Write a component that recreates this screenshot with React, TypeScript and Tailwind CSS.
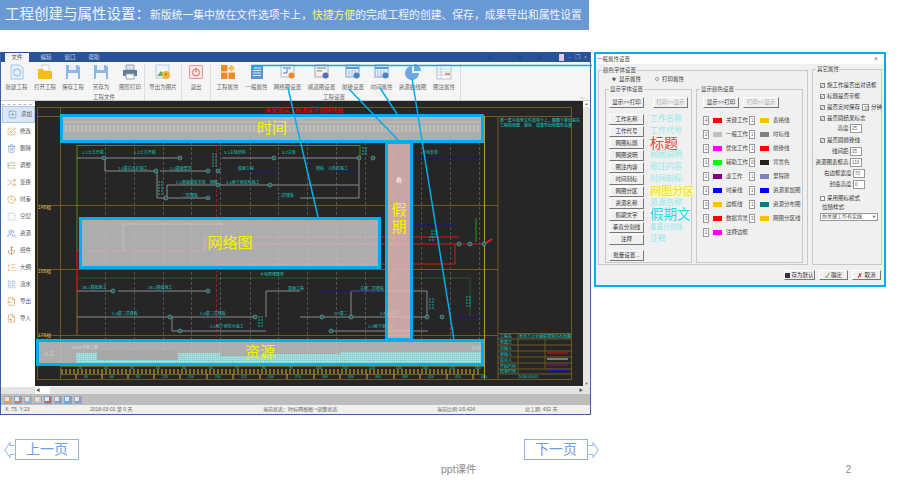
import React from 'react';
import {
  SquarePlus, SquarePen, Trash2, ListTree, Shuffle, Clock, SquareDashed, Users, Anchor, ListOrdered, LayoutGrid, FileOutput, FileInput,
} from 'lucide-react';

const FONT = '"Liberation Sans", "Noto Sans CJK SC", sans-serif';

// ---- ribbon data
const fileItems = [
  { label: '新建工程', kind: 'new', w: 'w-[29px]' },
  { label: '打开工程', kind: 'open', w: 'w-[28px]' },
  { label: '保存工程', kind: 'save', w: 'w-[28px]' },
  { label: '另存为', kind: 'save', w: 'w-[28px]' },
  { label: '图形打印', kind: 'print', w: 'w-[30px]' },
];

const projectItems = [
  { label: '工程属性', kind: 'blocks', w: 'w-[29px]' },
  { label: '一般属性', kind: 'list', w: 'w-[29px]' },
  { label: '网络图设置', kind: 'net', w: 'w-[33px]' },
  { label: '横道图设置', kind: 'gear', w: 'w-[35px]' },
  { label: '前锋设置', kind: 'grid', w: 'w-[28px]' },
  { label: '时间属性', kind: 'grid', w: 'w-[29px]' },
  { label: '资源曲线图', kind: 'pie', w: 'w-[33px]' },
  { label: '图注属性', kind: 'table', w: 'w-[30px]' },
];

function RibbonIcon({ kind }: { kind: string }) {
  return (
    <svg width="16" height="16" viewBox="0 0 16 16">
      {kind === 'new' && (
        <>
          <path d="M2 1h9l3 3v11H2z" fill="#e4f0fa" stroke="#a9c6e2" />
          <circle cx="8" cy="8.5" r="3.5" fill="none" stroke="#8cb4dc" />
        </>
      )}
      {kind === 'open' && (
        <>
          <path d="M5 1h7v6H5z" fill="#fff" stroke="#ccc" />
          <path d="M1 5h5l1 2h8v8H1z" fill="#f9bc15" />
        </>
      )}
      {kind === 'save' && (
        <>
          <path d="M1 1h12l2 2v12H1z" fill="#8cb8e8" />
          <path d="M4 1h7v5H4z" fill="#e8f1fb" />
          <path d="M3 9h10v6H3z" fill="#f2f6fb" />
        </>
      )}
      {kind === 'print' && (
        <>
          <path d="M4 1h8v5H4z" fill="#dfe3e8" stroke="#9aa5b1" />
          <path d="M1 6h14v6H1z" fill="#5f7f9c" />
          <path d="M4 10h8v5H4z" fill="#fff" stroke="#9aa5b1" />
        </>
      )}
      {kind === 'image' && (
        <>
          <path d="M1 1h13v13H1z" fill="#eef4fb" stroke="#b7cbe0" />
          <path d="M2 12l4-5 3 3 2-1 2 3z" fill="#6fb04a" />
          <circle cx="11" cy="11" r="4" fill="#f4b63f" />
          <path d="M11 9v2.5" stroke="#8a5a00" />
        </>
      )}
      {kind === 'exit' && (
        <>
          <rect x="1.5" y="1.5" width="13" height="13" rx="1" fill="#f7e4e4" stroke="#d79a9a" />
          <circle cx="8" cy="8.5" r="3.5" fill="none" stroke="#d86a6a" />
          <path d="M8 4v4" stroke="#d86a6a" />
        </>
      )}
      {kind === 'blocks' && (
        <>
          <rect x="1" y="1" width="6.5" height="6.5" fill="#ef8a2e" />
          <path d="M11.5 .8l3.5 3.5-3.5 3.5L8 4.300z" fill="#f7c04a" />
          <rect x="1" y="8.500" width="6.500" height="6.500" fill="#ef8a2e" />
          <rect x="8.500" y="8.500" width="6.500" height="6.500" fill="#ef8a2e" />
        </>
      )}
      {kind === 'list' && (
        <>
          <rect x="2" y="1" width="12" height="14" fill="#5b94d0" />
          <path d="M4 4h8M4 6.500h8M4 9h8M4 11.500h8" stroke="#dbe9f7" />
        </>
      )}
      {kind === 'net' && (
        <>
          <rect x="1" y="1" width="13" height="12" fill="#f7f7f7" stroke="#bbb" />
          <path d="M3 4h8M3 9h4V5" stroke="#5a6bc4" fill="none" />
          <circle cx="11.500" cy="11.500" r="3" fill="#ef8a2e" />
        </>
      )}
      {kind === 'gear' && (
        <>
          <rect x="1" y="1" width="13" height="12" fill="#f3f3f3" stroke="#aaa" />
          <path d="M3 4h9M3 7h5" stroke="#b56f5f" />
          <circle cx="11.500" cy="11.500" r="3" fill="#5a6bc4" />
        </>
      )}
      {kind === 'grid' && (
        <>
          <rect x="1" y="1" width="13" height="12" fill="#e9f0f8" stroke="#7ea3cc" />
          <path d="M1 4h13" stroke="#6a94c4" strokeWidth="2" />
          <path d="M4 6v6M7 6v6M10 6v6" stroke="#9ab5d4" />
          <circle cx="11.500" cy="11.500" r="3" fill="#4d84c0" />
        </>
      )}
      {kind === 'pie' && (
        <>
          <path d="M7 2a7 7 0 1 0 7 7H7z" fill="#6fa5e0" />
          <path d="M9 0a7 7 0 0 1 7 7H9z" fill="#6fa5e0" />
        </>
      )}
      {kind === 'table' && (
        <>
          <rect x="1" y="1" width="14" height="14" fill="#fbfbfb" stroke="#b9c6d4" />
          <path d="M5 1v14M1 5h14M1 8h14M1 11h14" stroke="#c5d3e2" />
          <rect x="9" y="9" width="5" height="2" fill="#ef9a5e" />
        </>
      )}
    </svg>
  );
}

function RibbonButton({ label, kind, w }: { label: string; kind: string; w: string }) {
  return (
    <div className={`flex flex-col items-center ${w}`}>
      <div className="h-[17px]">
        <RibbonIcon kind={kind} />
      </div>
      <span className="mt-[2px] text-[5.5px] leading-[8px] whitespace-nowrap text-[#666]">{label}</span>
    </div>
  );
}

// ---- left tool column
const sideItems = [
  { name: '添加', Icon: SquarePlus, color: '#5f8fd0' },
  { name: '修改', Icon: SquarePen, color: '#d89a40' },
  { name: '删除', Icon: Trash2, color: '#5f8fc4' },
  { name: '调整', Icon: ListTree, color: '#7aa060' },
  { name: '变换', Icon: Shuffle, color: '#d08a50' },
  { name: '时差', Icon: Clock, color: '#d8a030' },
  { name: '空层', Icon: SquareDashed, color: '#6f9fd8' },
  { name: '资源', Icon: Users, color: '#4f7fc0' },
  { name: '组件', Icon: Anchor, color: '#c07050' },
  { name: '大纲', Icon: ListOrdered, color: '#e09a50' },
  { name: '流水', Icon: LayoutGrid, color: '#8fb0d0' },
  { name: '导出', Icon: FileOutput, color: '#d08a40' },
  { name: '导入', Icon: FileInput, color: '#d08a40' },
];

// ---- CAD drawing
const gridX = [105, 134, 163, 191, 220, 250, 278, 307, 336, 365, 393, 421, 450, 479];
const grayPaths = [
  'M77 159H103M106 159H180M105 159V172H155M160 172H208M157 172V199H166M167 199H208M167 199V186H218M218 186H270M272 186H359M222 159H274M278 159H359M359 159V199H300',
  'M77 292H113M118 292H208M77 318H170M172 318H255M172 318V332H180M180 332H266M266 292V318M266 292H300M351 292V318M351 292H427V318M331 332H428M300 318H427',
  'M123 252V225H226M205 252V238',
];
const nodes = [
  [104, 159], [180, 159], [156, 172], [208, 172], [166, 199], [208, 199], [218, 186], [218, 172], [270, 186], [274, 159], [359, 159], [373, 159],
  [113, 292], [208, 292], [170, 318], [255, 318], [180, 332], [322, 318], [351, 318], [427, 318], [442, 318], [331, 332], [459, 245], [470, 245], [484, 245],
];
const tealLabels = [
  [82, 155, '1-1土方开挖'], [134, 155, '1-2土方开挖'], [118, 171, '1-3基坑支护施工'], [170, 171, '1-4基础垫层'], [176, 185, '2-1基础模板安装、钢筋'], [226, 185, '2-4地下室结构施工'],
  [182, 198, '二层楼板'], [224, 155, '3-1主体结构'], [282, 155, '3-2主体'], [238, 171, '屋面工程'], [278, 198, '二层楼板'], [316, 171, '楼板、人防层施工'], [422, 155, '水电安装'],
  [82, 290, '1B-1基础施工'], [148, 290, '1B-2基础施工'], [112, 316, '1-3基二层楼板'], [200, 316, '1-4基二层楼板'], [210, 329, '1-5地下室防水施工'], [288, 291, '屋面工程'],
  [360, 291, '主楼二层楼板'], [380, 316, '1-8基层施工'], [368, 329, '1-9地下室施工'], [260, 277, '水电预埋配管'], [334, 316, '1-7基二'],
];
const stackTags = [
  [212, 155, 5], [158, 183, 5], [466, 298, 4], [258, 318, 4], [429, 300, 4], [431, 232, 3], [362, 149, 3], [429, 238, 2],
];

function CadDrawing() {
  const ticks = Array.from({ length: 105 }, (_, i) => 62 + i * 4);
  const rulerX = [76, 102, 128, 154, 180, 207, 233, 260, 287, 314, 340, 367, 394, 420, 447, 473];
  return (
    <svg viewBox="35 102 548 285" className="w-full h-full block" fontFamily={FONT}>
      <rect x="35" y="102" width="548" height="285" fill="#262626" />
      {/* frame */}
      <g stroke="#6f5a20" fill="none" strokeWidth="1">
        <path d="M37.500 108.500H571.500V380.500H37.500zM37.500 117.500H571.500M60.500 108V380M37 206.500H498M37 270.500H498M37 336.500H498M498 117V380" />
        <path d="M60 367.500H484M60 375.500H484M498 334.500H571M498 340H571M498 346H571M498 352H571M498 358H571M498 364H571M498 370H571M498 375H571M518 334V375M545 340V370" />
      </g>
      <path d="M484.500 117V380" stroke="#b99a3c" />
      <path d="M77 146.500H360V158" stroke="#4b8a12" fill="none" />
      <path d="M77 146V252" stroke="#5a8a10" />
      <path d="M77 252V292" stroke="#d01010" strokeWidth="1.500" />
      <path d="M77 292V336" stroke="#8a6a22" />
      <path d="M77 279H470V318" stroke="#1d5c1d" fill="none" />
      {/* grid */}
      {gridX.map((x) => (
        <path key={x} d={`M${x}.5 143V367`} stroke="#666" strokeDasharray="3 2" strokeWidth="0.7" />
      ))}
      <path d="M216.500 130V340" stroke="#a01828" strokeDasharray="3 2" />
      {/* time scale */}
      <path d="M62 119H484M62 123H484M62 127H484M62 132H484" stroke="#b8a878" strokeWidth="0.7" />
      {ticks.map((x) => (
        <path key={x} d={`M${x} 127V132`} stroke="#c8b478" strokeWidth="1" />
      ))}
      {/* links */}
      {grayPaths.map((d) => (
        <path key={d} d={d} stroke="#8a8a8a" fill="none" strokeWidth="1" />
      ))}
      <path d="M77 252H205V238H459M216 265H455V245M205 245H482" stroke="#d01818" fill="none" />
      <path d="M247 172H274M335 172H358M412 159H484M412 226H455M456 318H484M320 292H386" stroke="#16167a" fill="none" />
      <path d="M476 219V243" stroke="#18a018" />
      <path d="M486 244l6-4" stroke="#e02020" strokeWidth="2" />
      {nodes.map(([x, y]) => (
        <circle key={`${x}-${y}`} cx={x} cy={y} r="2" fill="#2d5a5a" stroke="#59a5a5" strokeWidth="0.7" />
      ))}
      {tealLabels.map(([x, y, t]) => (
        <text key={`${x}-${y}`} x={x} y={y} fontSize="4" fill="#18c8c0">{t}</text>
      ))}
      {/* work names stacked vertically beside short links */}
      {stackTags.map(([x, y, n]) => (
        <g key={`${x}-${y}`} stroke="#19b0ac" strokeWidth="1" strokeDasharray="2 1">
          {Array.from({ length: n }, (_, i) => (
            <path key={i} d={`M${x} ${y + i * 3}h6`} />
          ))}
        </g>
      ))}
      <text x="44" y="356" fontSize="5" fill="#fff">人工</text>
      <text x="72" y="350" fontSize="4" fill="#dff">43.25平米工期</text>
      <text x="472" y="351" fontSize="4" fill="#0ff">累加值</text>
      {/* bottom ruler */}
      {ticks.map((x) => (
        <path key={x} d={`M${x} 370V375`} stroke="#d8b030" strokeWidth="1" />
      ))}
      {rulerX.map((x, i) => (
        <g key={x}>
          <path d={`M${x} 375V380`} stroke="#d8b030" />
          <text x={x + 8} y="379" fontSize="3.500" fill="#18c8c0">{(i + 1) * 30}</text>
          <text x={x + 2} y="370" fontSize="3.500" fill="#18c8c0">{(i + 1) * 10}</text>
        </g>
      ))}
      <text x="38" y="210" fontSize="5" fill="#c8b44c">148楼</text>
      <text x="38" y="274" fontSize="5" fill="#c8b44c">168楼</text>
      <text x="38" y="338" fontSize="5" fill="#c8b44c">178楼</text>
      <text x="265" y="113" fontSize="6" fill="#ff0000">某安置房工程进度计划横线图</text>
      <g fontSize="4" fill="#18d8d0">
        <text x="500" y="123">新一集中放至文件选项卡上，图图下拿出来在</text>
        <text x="500" y="128">工程的创建、保存、成果导出和属性设置</text>
        <text x="500" y="339">工程名</text>
        <text x="519" y="339">某省万元全面联建竖向布局图</text>
        <text x="500" y="345">所属方</text>
        <text x="500" y="351">校核人</text>
        <text x="500" y="357">审核人</text>
        <text x="500" y="363">校对人</text>
        <text x="500" y="369">开始时间</text>
        <text x="500" y="374">结束时间</text>
        <text x="518" y="379">2018-03-01</text>
      </g>
      <path d="M547 354H568" stroke="#e01010" />
      <path d="M547 360H568" stroke="#cfcfcf" />
      <path d="M547 366H568" stroke="#801080" />
      <path d="M547 372H568" stroke="#1010d0" strokeWidth="1.500" />
    </svg>
  );
}

// histogram that shows through the resource callout
function ResourceChart() {
  return (
    <svg viewBox="39 342 442 21" preserveAspectRatio="none" className="absolute inset-0 w-full h-full">
      <defs>
        <pattern id="resDots" width="2" height="2" patternUnits="userSpaceOnUse">
          <rect width="2" height="2" fill="#a6dcdc" />
          <rect width="1" height="1" fill="#7cc8c8" />
        </pattern>
      </defs>
      <path d="M76 353H143V360H178V353H220V356H260V354H340V352H481V363H76z" fill="url(#resDots)" />
      <path d="M97 350H177V360H97z" fill="#a8a8a8" />
    </svg>
  );
}

// ---- dialog data
const fontRows = [
  { name: '工作名称', sample: '工作名称', cls: 'text-[8px] text-[#8ceaea]' },
  { name: '工作代号', sample: '工作代号', cls: 'text-[8px] text-[#8ceaea]' },
  { name: '网图标题', sample: '标题', cls: 'text-[14px] text-[#f04040]' },
  { name: '网图说明', sample: '网图说明', cls: 'text-[8px] text-[#8ceaea]' },
  { name: '图注内容', sample: '图注内容', cls: 'text-[8px] text-[#8ceaea]' },
  { name: '时间刻标', sample: '时间刻标', cls: 'text-[8px] text-[#8ceaea]' },
  { name: '网图分区', sample: '网图分区', cls: 'text-[11px] text-[#ecdc30] bg-[#fafab4]' },
  { name: '资源名称', sample: '资源名称', cls: 'text-[8px] text-[#8ceaea]' },
  { name: '假期文字', sample: '假期文', cls: 'text-[13.500px] text-[#18e0e8]' },
  { name: '垂直分割线', sample: '垂直分割线', cls: 'text-[6.500px] text-[#8ceaea]' },
  { name: '注释', sample: '注释', cls: 'text-[8px] text-[#8ceaea]' },
];

const colorRows = [
  ['4', '#ff0000', '关键工作', '1', '#ffc000', '表格线'],
  ['2', '#c0c0c0', '一般工作', '1', '#808080', '时标线'],
  ['2', '#ff00ff', '优化工作', '1', '#ff0000', '前锋线'],
  ['1', '#00ff00', '辅助工作', '0', '#202020', '背景色'],
  ['1', '#800080', '虚工作', '1', '#8080c0', '里程碑'],
  ['1', '#0000ff', '时差线', '1', '#0000ff', '资源累加图'],
  ['3', '#ffc000', '边框线', '1', '#008080', '资源分布图'],
  ['3', '#ff0000', '数据背景', '3', '#ffc000', '网图分区线'],
  ['1', '#ff00ff', '注释边框', '', '', ''],
];

function WinButton({ children, className = '', disabled = false }: { children: React.ReactNode; className?: string; disabled?: boolean }) {
  return (
    <div
      className={`flex items-center justify-center bg-[#f0f0f0] border border-t-[#fff] border-l-[#fff] border-r-[#777] border-b-[#777] text-[5.5px] whitespace-nowrap ${disabled ? 'text-[#aaa]' : 'text-[#333]'} ${className}`}
    >
      {children}
    </div>
  );
}

function GroupBox({ title, className, children }: { title: string; className: string; children: React.ReactNode }) {
  return (
    <div className={`relative border border-[#c8c8c8] ${className}`}>
      <span className="absolute -top-[4px] left-[3px] px-[1px] bg-[#f0f0f0] text-[5.5px] leading-[7px] text-[#444] whitespace-nowrap">{title}</span>
      {children}
    </div>
  );
}

function NumBox({ value, className = 'w-[6px] h-[9px]' }: { value: string; className?: string }) {
  return (
    <span className={`inline-block shrink-0 bg-white border border-[#999] text-[4.5px] leading-[7px] text-[#666] pl-[1px] ${className}`}>{value}</span>
  );
}

function Check({ on = true, label }: { on?: boolean; label: string }) {
  return (
    <div className="flex items-center gap-[2px] h-[7px] text-[5.5px] leading-[7px] text-[#333] whitespace-nowrap">
      <span className="w-[5px] h-[5px] bg-white border border-[#888] text-[4px] leading-[3px] text-[#222]">{on ? '✓' : ''}</span>
      {label}
    </div>
  );
}

function PropRow({ label, value, labelW }: { label: string; value: string; labelW: string }) {
  return (
    <div className="flex items-center h-[9px] text-[5.5px] leading-[7px] text-[#333] whitespace-nowrap">
      <span className={`text-right ${labelW}`}>{label}</span>
      <NumBox value={value} className="w-[12px] h-[9px]" />
    </div>
  );
}

function PropertyDialog() {
  return (
    <div className="relative w-[292px] h-[235px] ml-[3px] border-2 border-[#00aeef] bg-[#f0f0f0] shrink-0">
      <div className="flex items-center justify-between h-[10px] bg-white pl-[1px] pr-[6px] text-[5.5px] text-[#444]">
        <span>一般属性设置</span>
        <span className="text-[7px] text-[#777]">×</span>
      </div>
      <div className="flex gap-[4px] pl-[2px] pt-[6px]">
        <GroupBox title="颜色字体设置" className="w-[210px] h-[195px]">
          <div className="flex items-center h-[8px] mt-[4px] pl-[13px] gap-[14px] text-[5.5px] text-[#333]">
            <span className="flex items-center gap-[3px]">
              <span className="w-[4px] h-[4px] rounded-full bg-[#444] border border-[#999]" />
              显示属性
            </span>
            <span className="flex items-center gap-[3px]">
              <span className="w-[4px] h-[4px] rounded-full bg-white border border-[#999]" />
              打印属性
            </span>
          </div>
          <div className="flex gap-[4px] pl-[6px] mt-[6px]">
            <GroupBox title="显示字体设置" className="w-[87px] h-[174px] pl-[3px] pt-[7px]">
              <div className="flex gap-[9px]">
                <WinButton className="w-[35px] h-[11px]">显示&gt;&gt;打印</WinButton>
                <WinButton disabled className="w-[35px] h-[11px]">打印&gt;&gt;显示</WinButton>
              </div>
              <div className="mt-[5px] flex flex-col">
                {fontRows.map((row) => (
                  <div key={row.name} className="flex items-center h-[12px]">
                    <WinButton className="w-[35px] h-[11px] shrink-0">{row.name}</WinButton>
                    <span className={`ml-[6px] w-[43px] overflow-x-clip whitespace-nowrap leading-[12px] ${row.cls}`}>
                      {row.sample}
                    </span>
                  </div>
                ))}
                <WinButton className="w-[35px] h-[11px] mt-[5px]">批量设置...</WinButton>
              </div>
            </GroupBox>
            <GroupBox title="显示颜色设置" className="w-[107px] h-[174px] pl-[6px] pt-[7px]">
              <div className="flex gap-[4px]">
                <WinButton className="w-[36px] h-[11px]">显示&gt;&gt;打印</WinButton>
                <WinButton disabled className="w-[36px] h-[11px]">打印&gt;&gt;显示</WinButton>
              </div>
              <div className="mt-[8px] flex flex-col gap-[5px]">
                {colorRows.map((row) => (
                  <div key={row[2]} className="flex items-center h-[9px] text-[5.5px] text-[#444] whitespace-nowrap">
                    <NumBox value={row[0]} />
                    <span className="ml-[4px] w-[9px] h-[5px] shrink-0" style={{ background: row[1] }} />
                    <span className="ml-[4px] w-[23px]">{row[2]}</span>
                    {row[3] && <NumBox value={row[3]} />}
                    {row[4] && <span className="ml-[5px] w-[9px] h-[5px] shrink-0" style={{ background: row[4] }} />}
                    <span className="ml-[4px]">{row[5]}</span>
                  </div>
                ))}
              </div>
            </GroupBox>
          </div>
        </GroupBox>
        <GroupBox title="其它属性" className="w-[70px] h-[196px] -mt-[1px] pl-[7px] pt-[12px]">
          <div className="flex flex-col gap-[4px]">
            <Check label="施工作是否出对话框" />
            <Check label="标题是否带框" />
            <div className="flex items-center gap-[2px] h-[7px] text-[5.5px] text-[#333] whitespace-nowrap">
              <Check label="是否定时保存" />
              <NumBox value="30" className="w-[7px] h-[7px]" />
              分钟
            </div>
            <Check label="是否圆结果标志" />
          </div>
          <div className="mt-[2px]">
            <PropRow label="高度:" value="25" labelW="w-[30px]" />
          </div>
          <div className="mt-[4px]">
            <Check label="是否圆前锋线" />
          </div>
          <div className="mt-[3px]">
            <PropRow label="线间距:" value="35" labelW="w-[30px]" />
          </div>
          <div className="flex flex-col gap-[2px] mt-[2px] -ml-[5px]">
            <PropRow label="资源图表框高:" value="110" labelW="w-[35px]" />
            <PropRow label="右边框宽度:" value="70" labelW="w-[38px]" />
            <PropRow label="封底高度:" value="0" labelW="w-[38px]" />
          </div>
          <div className="mt-[6px]">
            <Check on={false} label="采用图标模式" />
          </div>
          <div className="mt-[2px] pl-[2px] text-[5.5px] leading-[7px] text-[#333]">位随样式:</div>
          <div className="flex items-center justify-between w-[58px] h-[8px] mt-[2px] bg-white border border-[#999] text-[5px] text-[#444] pl-[1px] whitespace-nowrap overflow-hidden">
            <span>你关键工作有实线</span>
            <span className="text-[4px] pr-[1px]">▼</span>
          </div>
        </GroupBox>
      </div>
      <div className="flex justify-end gap-[4px] pr-[3px] mt-[5px]">
        <WinButton className="w-[31px] h-[10px] gap-[1px]">
          <span className="w-[5px] h-[5px] bg-[#334]" />存为默认
        </WinButton>
        <WinButton className="w-[29px] h-[10px] gap-[1px]">
          <span className="text-[7px] leading-[7px] text-[#109010]">✓</span>确定
        </WinButton>
        <WinButton className="w-[29px] h-[10px] gap-[1px]">
          <span className="text-[7px] leading-[7px] text-[#d01010]">✗</span>取消
        </WinButton>
      </div>
    </div>
  );
}

function AppWindow() {
  return (
    <div className="relative w-[591px] h-[363px] border-x border-b border-[#3b62a8] bg-[#f3f3f3] flex flex-col shrink-0">
      {/* title / tabs */}
      <div className="h-[10px] bg-[#2a5298] flex items-end pl-[4px] text-[5.5px] text-[#c9d6ea] shrink-0">
        <span className="w-[24px] h-[9px] bg-[#f5f5f5] text-[#555] text-center leading-[9px]">文件</span>
        <span className="ml-[5px] w-[24px] text-center leading-[9px]">编辑</span>
        <span className="w-[24px] text-center leading-[9px]">窗口</span>
        <span className="w-[24px] text-center leading-[9px]">帮助</span>
        <div className="ml-auto flex items-center gap-[4px] pr-[3px] h-[9px] text-[#8fa6c9] leading-[9px]">
          <span className="text-[#24477f] text-[7px] mr-[18px]">★</span>
          <span className="text-[#24477f] text-[8px] mr-[8px]">★</span>
          <span className="text-[#24477f] text-[7px] mr-[12px]">★</span>
          <span className="w-[5px] h-[7px] bg-[#e8c8d0]" />
          <span>–</span>
          <span>❐</span>
          <span>×</span>
        </div>
      </div>
      {/* ribbon */}
      <div className="relative h-[39px] flex shrink-0 bg-[#f5f5f5] border-b border-[#ccc] pt-[2px] pl-[2px]">
        <div className="flex flex-col items-center w-[142px] border-r border-[#ddd]">
          <div className="flex">
            {fileItems.map((it) => (
              <RibbonButton key={it.label} {...it} />
            ))}
          </div>
        </div>
        <div className="w-[37px] flex justify-center border-r border-[#ddd]">
          <RibbonButton label="导出为图片" kind="image" w="w-[33px]" />
        </div>
        <div className="w-[29px] flex justify-center border-r border-[#ddd]">
          <RibbonButton label="退出" kind="exit" w="w-[24px]" />
        </div>
        <div className="flex pl-[2px] w-[250px] border-r border-[#ddd]">
          {projectItems.map((it) => (
            <RibbonButton key={it.label} {...it} />
          ))}
        </div>
        <span className="absolute right-[5px] bottom-[1px] text-[5px] leading-[6px] text-[#777]">︿</span>
      </div>
      <div className="flex flex-1 min-h-0">
        {/* side tools */}
        <div className="w-[34px] shrink-0 bg-white pt-[3px] pl-[1px]">
          <div className="h-[1px] w-[30px] border-t border-dashed border-[#bbb] mb-[1px]" />
          {sideItems.map(({ name, Icon, color }, i) => (
            <div
              key={name}
              className={`flex items-center h-[17px] pl-[5px] text-[5.5px] text-[#555] gap-[4px] ${i === 0 ? 'bg-[#dbe7f5] border border-[#a9c8e8]' : ''}`}
            >
              <Icon size={9} color={color} strokeWidth={1.6} className="shrink-0" />
              {name}
            </div>
          ))}
        </div>
        <div className="flex-1 min-w-0 flex flex-col">
          <div className="flex flex-1 min-h-0">
            <div className="w-[548px] h-[285px] shrink-0">
              <CadDrawing />
            </div>
            <div className="flex-1 bg-[#e6e6e6] flex flex-col items-center justify-between text-[4px] text-[#666]">
              <span className="bg-white w-full text-center">▲</span>
              <span>▼</span>
            </div>
          </div>
        </div>
      </div>
      {/* bottom scroll, toolbar, status */}
      <div className="h-[7px] shrink-0 bg-[#e3e3e3] flex items-center pl-[34px] pr-[7px] text-[4px] text-[#555]">
        <span className="w-[15px] bg-white h-full leading-[7px] pl-[1px]">◀</span>
        <span className="ml-auto">▶</span>
      </div>
      <div className="h-[11px] shrink-0 bg-[#bdbdbd] flex items-center gap-[2px] pl-[3px]">
        {['#e8a060', '#d08060', '#8fb0d8', '#c8c8c8', '#d06050', '#7f9fd0', '#7f9fd0', '#7f9fd0'].map((c, i) => (
          <span
            key={i}
            className={`w-[8px] h-[8px] border ${i === 1 || i === 4 || i === 6 ? 'border-[#6fa8dc] bg-[#dfe9f5]' : 'border-[#aaa] bg-[#e3e3e3]'}`}
            style={{ boxShadow: `inset -2px -2px 0 ${c}` }}
          />
        ))}
      </div>
      <div className="h-[9px] shrink-0 bg-[#f0f0f0] flex items-center text-[5px] text-[#666] whitespace-nowrap pl-[4px]">
        <span className="w-[85px]">X: 75 &nbsp;Y:23</span>
        <span className="w-[173px]">2018-03-01 第 0 天</span>
        <span className="w-[174px]">当前状态：时标网络图-&gt;调整状态</span>
        <span className="w-[88px]">当前比例:1/0.424</span>
        <span>总工期: 432 天</span>
      </div>
    </div>
  );
}

function PageButton({ label, dir }: { label: string; dir: 'left' | 'right' }) {
  const arrow = (
    <svg width="11" height="16" viewBox="0 0 11 16" className="shrink-0">
      <path
        d={dir === 'left' ? 'M10.500 3.500H6V.5L.8 8 6 15.500V12.500H10.500' : 'M.5 3.500H5V.5L10.200 8 5 15.500V12.500H.5'}
        fill="none"
        stroke="#8fb4e6"
      />
    </svg>
  );
  return (
    <div className="flex items-center">
      {dir === 'left' && arrow}
      <div className="w-[64px] h-[21px] border border-[#8fb4e6] flex items-center justify-center text-[14px] text-[#6f9fdc]">
        {label}
      </div>
      {dir === 'right' && arrow}
    </div>
  );
}

export default function App() {
  return (
    <div className="relative w-[920px] h-[491px] bg-white overflow-hidden" style={{ fontFamily: FONT }}>
      {/* heading */}
      <div className="w-[589px] h-[30px] bg-[#6a9ad6] flex items-center pl-[5px] text-[#f0f4fa] whitespace-nowrap">
        <span className="text-[14.500px]">工程创建与属性设置：</span>
        <span className="text-[10.800px]">
          新版统一集中放在文件选项卡上，<span className="text-[#f5f56a]">快捷方便</span>的完成工程的创建、保存，成果导出和属性设置
        </span>
      </div>

      <div className="flex mt-[22px]">
        <AppWindow />
        <PropertyDialog />
      </div>

      {/* page nav */}
      <div className="flex items-center w-[599px] pl-[4px] mt-[24px] justify-between">
        <PageButton label="上一页" dir="left" />
        <PageButton label="下一页" dir="right" />
      </div>
      <div className="flex items-center mt-[2px] text-[#8c8c8c] text-[10.500px] leading-[14px]">
        <span className="ml-[441px]">ppt课件</span>
        <span className="ml-[369px]">2</span>
      </div>

      {/* ribbon group captions sit on the ribbon bottom edge */}
      <span className="absolute left-[93px] top-[93px] text-[5.500px] text-[#666]">工程文件</span>
      <span className="absolute left-[323px] top-[93px] text-[5.500px] text-[#666]">工程设置</span>

      {/* callouts over the screenshot */}
      <div className="absolute left-[60px] top-[114px] w-[424px] h-[29px] border-[3px] border-[#00aeef] bg-[#d0d0d0]/80 flex items-center justify-center text-[15px] text-[#f4f400]">
        时间
      </div>
      <div className="absolute left-[79px] top-[217px] w-[302px] h-[52px] border-[3px] border-[#00aeef] bg-[#d0d0d0]/80 flex items-center justify-center text-[15px] text-[#f4f400]">
        网络图
      </div>
      <div className="absolute left-[36px] top-[339px] w-[448px] h-[27px] border-[3px] border-[#00aeef] bg-[#d0d0d0]/80 flex items-center justify-center text-[15px] text-[#f4f400]">
        <ResourceChart />
        <span className="relative">资源</span>
      </div>
      <div className="absolute left-[385px] top-[141px] w-[28px] h-[200px] border-[3px] border-[#00aeef] bg-[#e8bcbc]/85 flex flex-col items-center text-[15px] leading-[17px] text-[#f4f400]">
        <span className="mt-[32px] text-[6px] leading-[8px] text-white">春</span>
        <span className="mt-[17px]">假</span>
        <span>期</span>
      </div>

      <svg className="absolute inset-0 pointer-events-none" width="920" height="491" viewBox="0 0 920 491">
        <g stroke="#00aeef" fill="none">
          <path d="M253 70V65.500H592" strokeWidth="1.500" />
          <path d="M288 88L318 217M349 89L399 141M380 88L397 114M412 78L454 340" strokeWidth="1.500" />
        </g>
      </svg>
    </div>
  );
}
